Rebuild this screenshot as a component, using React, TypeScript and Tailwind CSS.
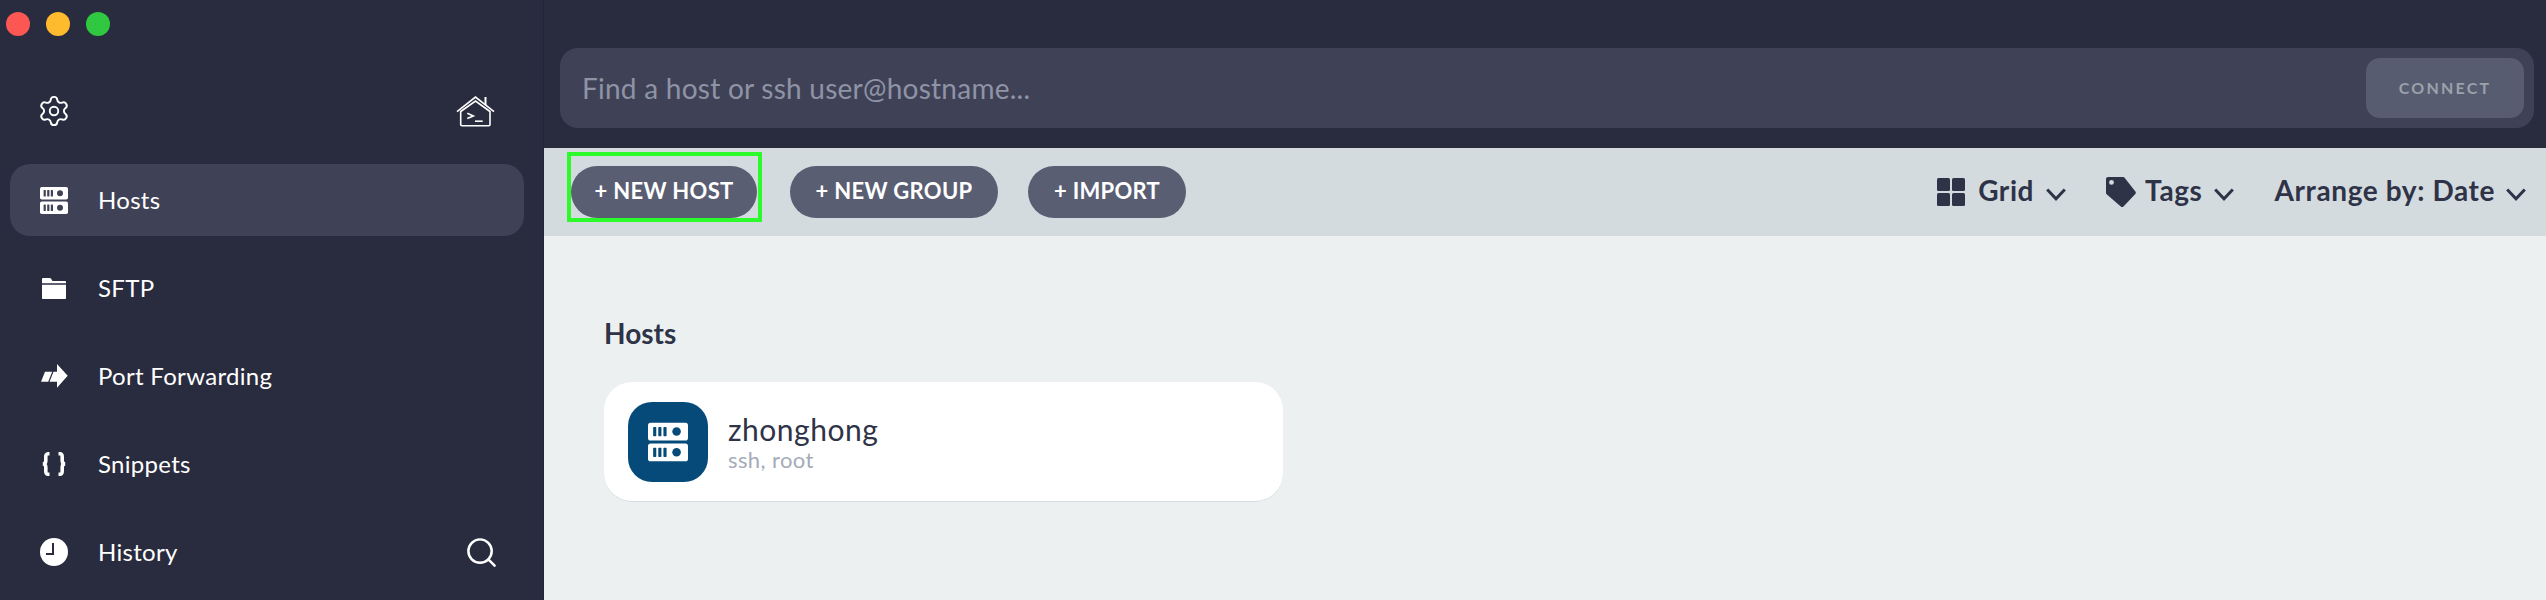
import React from 'react';
import { Settings, Search } from 'lucide-react';

const FONT = "font-['Lato',sans-serif]";

const ServerIcon: React.FC<{ className: string; cut: string }> = ({ className, cut }) => (
  <svg viewBox="0 0 28 27" className={className}>
    {[0, 14.5].map((y) => (
      <g key={y}>
        <rect x="0" y={y} width="28" height="12.5" rx="1.8" fill="currentColor" />
        {[3.6, 7.2, 10.8].map((x) => (
          <rect key={x} x={x} y={y + 3} width="2.2" height="6.5" rx="0.5" fill={cut} />
        ))}
        <circle cx="20" cy={y + 6.2} r="3" fill={cut} />
      </g>
    ))}
  </svg>
);

const FolderIcon = () => (
  <svg viewBox="0 0 24 21" className="w-[24px] h-[21px]">
    <path d="M0 1.2C0 .5.5 0 1.2 0h6.6c.6 0 1 .3 1.3.7L10.5 3H23c.6 0 1 .4 1 1v1.2H0zM0 6.8h24V20c0 .6-.4 1-1 1H1c-.6 0-1-.4-1-1z" fill="#ffffff" />
  </svg>
);

const ForwardIcon = () => (
  <svg viewBox="0 0 27 24" className="w-[27px] h-[24px]">
    <path d="M4 7.7h7.2L7.2 17.7H0z" fill="#ffffff" />
    <path d="M16 0l10.7 11.7L16 23.7v-6H8.5l4-10H16z" fill="#ffffff" />
  </svg>
);

const BracesIcon = () => (
  <svg viewBox="0 0 26 24" className="w-[26px] h-[24px]" fill="none" stroke="#ffffff" strokeWidth="3.6">
    <path d="M8.5 1.8H7.2C5.2 1.8 4.8 3 4.8 4.8v4c0 1.8-.9 3.2-3 3.2 2.1 0 3 1.4 3 3.2v4c0 1.8.4 3 2.4 3h1.3" />
    <path d="M17.5 1.8h1.3c2 0 2.4 1.2 2.4 3v4c0 1.8.9 3.2 3 3.2-2.1 0-3 1.4-3 3.2v4c0 1.8-.4 3-2.4 3h-1.3" />
  </svg>
);

const ClockIcon = () => (
  <svg viewBox="0 0 28 28" className="w-[28px] h-[28px]">
    <circle cx="14" cy="14" r="14" fill="#ffffff" />
    <path d="M13 5v11H6" fill="none" stroke="#292c3e" strokeWidth="2" />
  </svg>
);

const HouseIcon = () => (
  <svg viewBox="0 0 39 31" className="w-[39px] h-[31px]" fill="none" stroke="#ffffff" strokeWidth="1.6">
    <path d="M1 15.7L19.5 1 38 15.7" />
    <path d="M4.7 15.5L19.5 5 34 15.5V28.5c0 .7-.5 1.2-1.2 1.2H6c-.8 0-1.3-.5-1.3-1.2z" />
    <path d="M29.5 1v8" strokeWidth="2" />
    <path d="M11.3 17.3l6 2.6-6 2.6" />
    <path d="M19 25.2h7.7" />
  </svg>
);

const Chevron = () => (
  <svg viewBox="0 0 20 13" className="mt-[5px] w-[20px] h-[13px]" fill="none" stroke="#2f3347" strokeWidth="3">
    <path d="M1.2 1.5L10 10.8l8.8-9.3" />
  </svg>
);

const GridIcon = () => (
  <svg viewBox="0 0 28 28" className="w-[28px] h-[28px]" fill="#2f3347">
    <rect x="0" y="0" width="13" height="13" rx="1.5" />
    <rect x="15" y="0" width="13" height="13" rx="1.5" />
    <rect x="0" y="15" width="13" height="13" rx="1.5" />
    <rect x="15" y="15" width="13" height="13" rx="1.5" />
  </svg>
);

const TagIcon = () => (
  <svg viewBox="0 0 30 30" className="w-[30px] h-[30px]">
    <path
      fillRule="evenodd"
      d="M2 0h15c.7 0 1.2.3 1.6.8l10.8 13.7c.6.8.6 1.8-.1 2.5L17.5 29.4c-.8.8-2 .8-2.7 0L.6 17.3C.2 16.9 0 16.4 0 15.8V2C0 .9.9 0 2 0zm3.5 3a2.4 2.4 0 100 4.8 2.4 2.4 0 000-4.8z"
      fill="#2f3347"
    />
  </svg>
);

const navItems = [
  { label: 'Hosts', icon: <ServerIcon className="w-[28px] h-[27px] text-white" cut="#3f4256" /> },
  { label: 'SFTP', icon: <FolderIcon /> },
  { label: 'Port Forwarding', icon: <ForwardIcon /> },
  { label: 'Snippets', icon: <BracesIcon /> },
  { label: 'History', icon: <ClockIcon /> },
];

const App: React.FC = () => {
  return (
    <div className={`flex h-[600px] w-full overflow-hidden ${FONT}`}>
      <aside className="flex w-[544px] shrink-0 flex-col border-r border-[#23263a] bg-[#292c3e] pl-[10px] pr-[19px]">
        <div className="-ml-[4px] flex h-[48px] items-center gap-[16px]">
          <span className="h-[24px] w-[24px] rounded-full bg-[#fd5754]" />
          <span className="h-[24px] w-[24px] rounded-full bg-[#febb2e]" />
          <span className="h-[24px] w-[24px] rounded-full bg-[#30c840]" />
        </div>
        <div className="flex h-[116px] items-start justify-between px-[29px] pt-[48px]">
          <Settings size={34} strokeWidth={1.35} className="-ml-[2px] -mt-[2px] text-white" />
          <HouseIcon />
        </div>
        <nav className="flex flex-col gap-[16px]">
          {navItems.map((item, i) => (
            <div
              key={item.label}
              className={`flex h-[72px] items-center rounded-[20px] pl-[30px] pr-[29px] ${i === 0 ? 'bg-[#3f4256]' : ''}`}
            >
              <span className="flex w-[28px] shrink-0 justify-center">{item.icon}</span>
              <span className="ml-[30px] flex-1 text-[24px] tracking-[0.3px] text-white">{item.label}</span>
              {item.label === 'History' && <Search size={35} strokeWidth={1.7} className="-mr-[4px] text-white" />}
            </div>
          ))}
        </nav>
      </aside>

      <main className="flex min-w-0 flex-1 flex-col bg-[#ecf0f1]">
        <div className="flex h-[148px] shrink-0 items-start bg-[#292c3e] pl-[16px] pr-[12px] pt-[48px]">
          <div className="flex h-[80px] flex-1 items-center justify-between rounded-[18px] bg-[#3f4256] pl-[22px] pr-[10px]">
            <span className="text-[28px] tracking-[0.25px] text-[#8f93a6]">Find a host or ssh user@hostname...</span>
            <button className="h-[60px] w-[158px] rounded-[14px] bg-[#585c70] text-[16px] font-bold tracking-[2.2px] text-[#9aa2ab]">
              CONNECT
            </button>
          </div>
        </div>

        <div className="flex h-[88px] shrink-0 items-center justify-between bg-[#d4dbdf] pl-[27px] pr-[20px]">
          <div className="flex items-center">
            <button className="relative h-[52px] w-[186px] rounded-full bg-[#5a5e73] pb-[4px] text-[22px] font-bold tracking-[0.3px] text-white">
              + NEW HOST
              <span className="absolute left-[-4px] top-[-14px] h-[70px] w-[195px] border-[4px] border-[#2bfb2b]" />
            </button>
            <button className="ml-[33px] h-[52px] w-[208px] rounded-full bg-[#5a5e73] pb-[4px] text-[22px] font-bold tracking-[0.3px] text-white">
              + NEW GROUP
            </button>
            <button className="ml-[30px] h-[52px] w-[158px] rounded-full bg-[#5a5e73] pb-[4px] text-[22px] font-bold tracking-[0.3px] text-white">
              + IMPORT
            </button>
          </div>
          <div className="flex items-center text-[28px] font-bold tracking-[0.6px] text-[#2f3347]">
            <GridIcon />
            <span className="ml-[13px] pb-[4px]">Grid</span>
            <span className="ml-[12px]"><Chevron /></span>
            <span className="ml-[40px]"><TagIcon /></span>
            <span className="ml-[9px] pb-[4px]">Tags</span>
            <span className="ml-[11px]"><Chevron /></span>
            <span className="ml-[41px] pb-[4px]">Arrange by: Date</span>
            <span className="ml-[11px]"><Chevron /></span>
          </div>
        </div>

        <div className="flex-1 pl-[60px] pt-[78px]">
          <h2 className="text-[28px] font-bold leading-[38px] text-[#2f3347]">Hosts</h2>
          <div className="mt-[30px] flex h-[120px] w-[679px] items-center rounded-[28px] border-b border-[#d4dbdf] bg-white pl-[24px]">
            <div className="flex h-[80px] w-[80px] items-center justify-center rounded-[24px] bg-[#064a79]">
              <ServerIcon className="h-[40px] w-[40px] text-white" cut="#064a79" />
            </div>
            <div className="ml-[20px] flex flex-col">
              <span className="text-[30px] leading-[36px] tracking-[0.5px] text-[#2f3347]">zhonghong</span>
              <span className="text-[22px] leading-[26px] tracking-[0.4px] text-[#a4abb8]">ssh, root</span>
            </div>
          </div>
        </div>
      </main>
    </div>
  );
};

export default App;
